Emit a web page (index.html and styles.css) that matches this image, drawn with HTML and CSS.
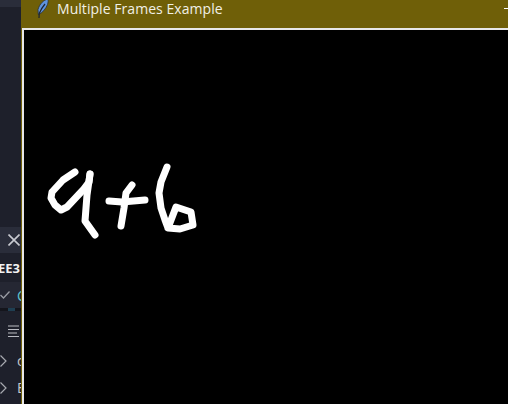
FILE: index.html

```html
<!DOCTYPE html>
<html lang="en">
<head>
  <meta charset="UTF-8">
  <meta name="viewport" content="width=device-width, initial-scale=1">
  <title>Multiple Frames Example</title>
  <link rel="stylesheet" href="styles.css">
</head>
<body>

  <div class="editor">
    <div class="editor-top"></div>
    <div class="editor-space"></div>
    <div class="panel-head">
      <svg class="close-icon" width="12" height="12" viewBox="0 0 12 12">
        <path d="M0.5 0.5L11.5 11.5M11.5 0.5L0.5 11.5" stroke="#c8cad0" stroke-width="1.6" fill="none"/>
      </svg>
    </div>
    <div class="panel-title">EE3</div>
    <div class="check-row">
      <svg class="check-icon" width="10" height="8" viewBox="0 0 10 8">
        <path d="M0.5 4L3.5 7L9.5 0.5" stroke="#9a9ca4" stroke-width="1.3" fill="none"/>
      </svg>
      <span class="check-letter">C</span>
    </div>
    <div class="row-divider"><span class="divider-mark"></span></div>
    <div class="lines-row">
      <svg width="12" height="12" viewBox="0 0 12 12">
        <path d="M0 1H11M0 4.500H11M0 8H9M0 11.500H11" stroke="#b9bbc2" stroke-width="1.200" fill="none"/>
      </svg>
    </div>
    <div class="tree-row">
      <svg class="chevron" width="7" height="12" viewBox="0 0 7 12">
        <path d="M0.500 0.500L6 6L0.500 11.500" stroke="#a8aab0" stroke-width="1.200" fill="none"/>
      </svg>
      <span class="tree-label">c</span>
    </div>
    <div class="tree-row">
      <svg class="chevron" width="7" height="12" viewBox="0 0 7 12">
        <path d="M0.500 0.500L6 6L0.500 11.500" stroke="#a8aab0" stroke-width="1.200" fill="none"/>
      </svg>
      <span class="tree-label">E</span>
    </div>
  </div>

  <div class="window">
    <div class="titlebar">
      <svg class="feather" width="13" height="18" viewBox="0 0 13 18">
        <path d="M12 -1C7.500 0 3.500 4 2 9.500L2.300 14.500C6.500 13 10 8.500 11.500 4.500C12.200 2.500 12.300 0.500 12 -1Z" fill="#5f93dc" stroke="#2b3038" stroke-width="0.800"/>
        <path d="M9 4C6.500 7 4.500 10 3.200 13.500L3 18" stroke="#1d2430" stroke-width="1.200" fill="none"/>
      </svg>
      <span class="title">Multiple Frames Example</span>
      <span class="minimize"></span>
    </div>
    <div class="frame">
      <svg class="sketch" viewBox="24 30 484 374">
        <g stroke="#fff" stroke-width="7" fill="none" stroke-linecap="round" stroke-linejoin="round">
          <path d="M75 172L63 180L52 192L51 198L55 205L61 210L67 207L83 190L89 182L90 174"/>
          <path d="M90 174L87 195L85 221L95 235"/>
          <path d="M109 201L122 202L145 200"/>
          <path d="M132 185L126 193L124 208L121 226"/>
          <path d="M167 167L161 182L159 193L161 208L165 220L168 228L180 229L193 225L191 212L176 207L168 228"/>
        </g>
      </svg>
    </div>
  </div>

</body>
</html>
```

FILE: styles.css

```css
html, body {
  height: 100%;
}
body {
  margin: 0;
  display: flex;
  background: #000;
  overflow: hidden;
  font-family: "Open Sans", "Liberation Sans", sans-serif;
}
.editor {
  width: 21px;
  flex: none;
  display: flex;
  flex-direction: column;
  background: #1e202b;
  overflow: hidden;
  color: #d8dae0;
}
.editor-top {
  height: 7px;
  background: #2a2d3a;
}
.editor-space {
  height: 220px;
}
.panel-head {
  height: 26px;
  background: #2a2d3a;
  display: flex;
  align-items: center;
}
.close-icon {
  margin-left: 8px;
  flex: none;
}
.panel-title {
  height: 29px;
  line-height: 31px;
  font-size: 13px;
  font-weight: 700;
  color: #f2f2f2;
  margin-left: -2px;
  white-space: nowrap;
}
.check-row {
  height: 26px;
  background: #252733;
  display: flex;
  align-items: center;
}
.check-icon {
  flex: none;
}
.check-letter {
  margin-left: 7px;
  font-size: 14px;
  color: #5fc4cf;
}
.row-divider {
  height: 3px;
  background: #14151c;
  display: flex;
  justify-content: center;
}
.divider-mark {
  width: 7px;
  height: 3px;
  margin-left: 1px;
  background: #1f3f52;
}
.lines-row {
  height: 36px;
  flex: none;
  padding: 14px 0 0 8px;
  box-sizing: border-box;
}
.lines-row svg {
  display: block;
}
.tree-row {
  height: 27px;
  display: flex;
  align-items: center;
  flex: none;
}
.chevron {
  flex: none;
}
.tree-label {
  margin-left: 10px;
  font-size: 14px;
  color: #c5c7cc;
}
.window {
  flex: 1;
  min-width: 0;
  display: flex;
  flex-direction: column;
  background: #6f5f08;
}
.titlebar {
  height: 28px;
  flex: none;
  display: flex;
  align-items: flex-start;
}
.feather {
  margin-left: 15px;
  flex: none;
}
.title {
  margin-left: 8px;
  font-size: 14px;
  line-height: 18px;
  letter-spacing: 0.05px;
  color: #f1f0e6;
}
.minimize {
  margin-left: auto;
  margin-top: 8px;
  width: 4px;
  height: 1px;
  background: #fff;
}
.frame {
  flex: 1;
  min-height: 0;
  margin-left: 1px;
  border-top: 2px solid #e8e8e8;
  border-left: 2px solid #e8e8e8;
  background: #000;
}
.sketch {
  display: block;
  width: 100%;
  height: 100%;
}
```
